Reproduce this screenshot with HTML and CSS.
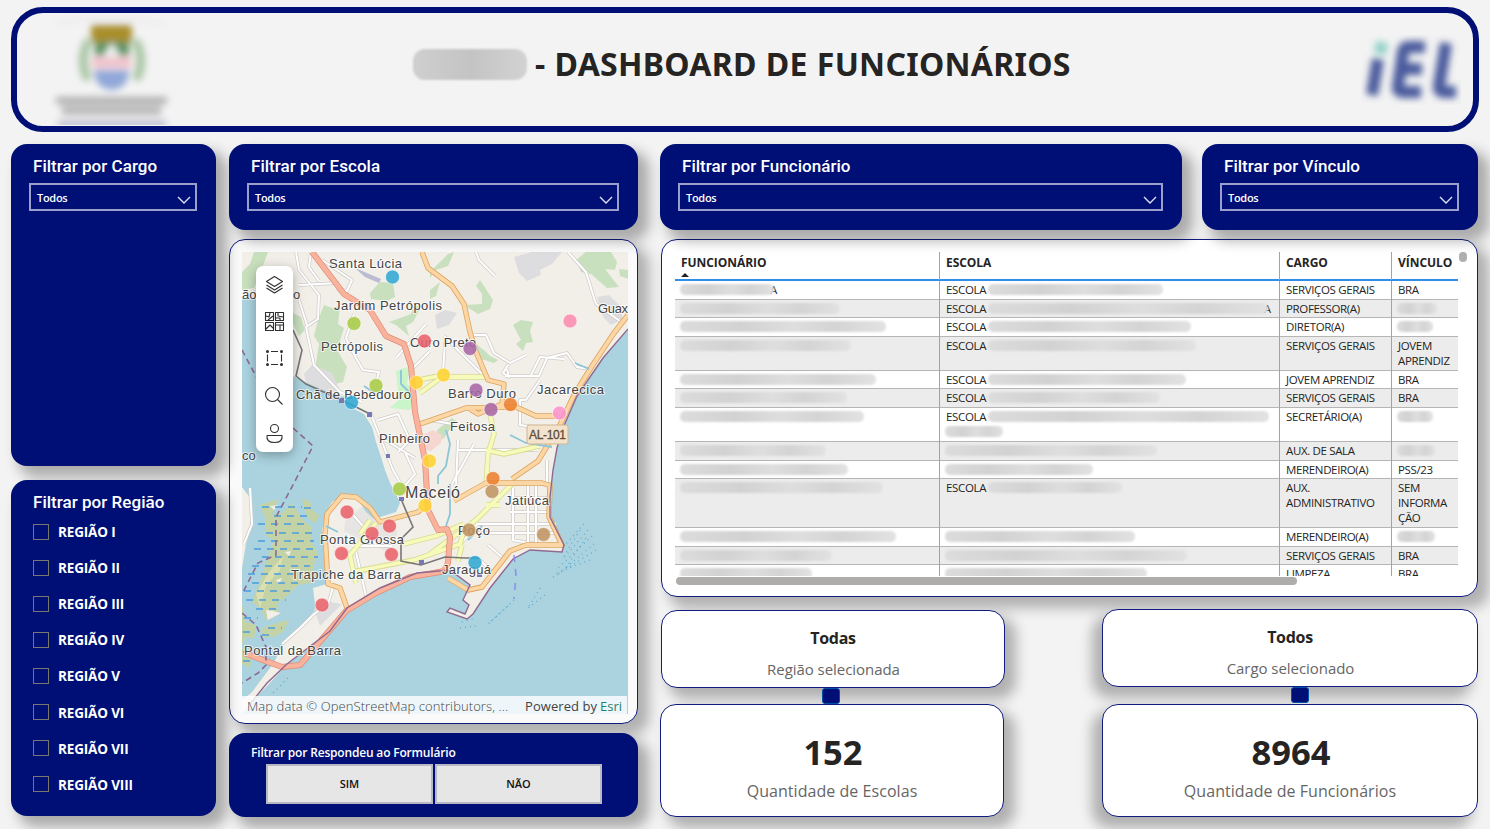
FILE: index.html
```
<!DOCTYPE html>
<html lang="pt-BR">
<head>
<meta charset="utf-8">
<title>Dashboard de Funcionários</title>
<link rel="stylesheet" href="styles.css">
</head>
<body>
<header class="banner">
  <svg class="crest" width="124" height="110" viewBox="50 15 124 110">
    <defs><filter id="soft" x="-20%" y="-20%" width="140%" height="140%"><feGaussianBlur stdDeviation="3.6"/></filter></defs>
    <g filter="url(#soft)">
      <path d="M56 24Q112 12 165 24" fill="none" stroke="#e2e2e2" stroke-width="2"/>
      <path d="M89 40Q78 60 88 80M135 40Q146 60 136 80" fill="none" stroke="#a9c6a4" stroke-width="9"/>
      <rect x="91" y="25" width="41" height="17" rx="2" fill="#a98e2c"/>
      <path d="M95 42h34v14H95z" fill="#5d9463"/>
      <path d="M103 56l9-14 8 14z" fill="#eef3ee"/>
      <path d="M92 57h39v11H92z" fill="#f0c3ca"/>
      <path d="M94 70h35q0 18-17 20-18-2-18-20z" fill="#91a7d8"/>
      <rect x="56" y="97" width="111" height="7" fill="#adadad"/>
      <rect x="62" y="106" width="99" height="9" fill="#b8b8b8"/>
      <rect x="58" y="121" width="108" height="6" fill="#b4b5cc"/>
    </g>
  </svg>
  <h1 class="title"><span class="smudge name"></span><span class="title-text">- DASHBOARD DE FUNCIONÁRIOS</span></h1>
  <svg class="brand" width="100" height="70" viewBox="1361 35 100 70">
    <g filter="url(#soft)" fill="none" stroke="#4a5a9c" stroke-width="12" stroke-linejoin="round">
      <path d="M1378 59l-6 36"/>
      <path d="M1425 47h-17q-4 0-5 5l-5 34q-1 6 5 6h18M1402 69h20"/>
      <path d="M1446 43l-7 43q-1 6 5 6h12"/>
      <path d="M1382 42l-2 12" stroke="#8fd0c6"/>
    </g>
  </svg>
</header>

<main class="board">
  <div class="col-left">
    <section class="panel cargo">
      <h2>Filtrar por Cargo</h2>
      <div class="select"><span>Todos</span><svg width="14" height="8" viewBox="0 0 14 8"><path d="M1 1l6 6 6-6"/></svg></div>
    </section>
    <section class="panel regiao">
      <h2>Filtrar por Região</h2>
      <ul>
        <li><i></i>REGIÃO I</li><li><i></i>REGIÃO II</li><li><i></i>REGIÃO III</li><li><i></i>REGIÃO IV</li>
        <li><i></i>REGIÃO V</li><li><i></i>REGIÃO VI</li><li><i></i>REGIÃO VII</li><li><i></i>REGIÃO VIII</li>
      </ul>
    </section>
  </div>

  <div class="col-mid">
    <section class="panel slim">
      <h2>Filtrar por Escola</h2>
      <div class="select"><span>Todos</span><svg width="14" height="8" viewBox="0 0 14 8"><path d="M1 1l6 6 6-6"/></svg></div>
    </section>
    <section class="card mapcard">
      <svg class="map" width="386" height="462" viewBox="242 252 386 462">
        <defs>
          <path id="minor" d="M296 252l3 18 20 25 -1 24-12 8 8 38 26 27 22 10M299 285l40-2M319 281l-10-14 2-15M299 300l8 25M322 260l30 20-5 11-10-2M354 314l-8 24 10 20 7 12 16 2-4 14M476 252l3 8 16 16M568 252l18 20 10 32 24 17M426 324l-30 34M444 336l40 40M445 342l-2 30M430 351l-20 20M474 335l12 0 8 18 16 10 16-8M508 365l-5 8 6 4-2-8M505 376h34l8-18 20-5 10 14 12 2M530 377l10-20 24 2M540 380l-14 20h-6v25l14 2M378 420l20-6 12 26-12 12M371 414l22 56 8 14M385 440l30 18M405 452l10 22-12 14M430 420l22 4M458 440l-2 44M458 450h80M452 484l22-40M547 460v22M513 488v52M528 485v60M536 485v60M514 498h34M510 512h40M476 524h80M476 533h82M512 540l36 6M460 545l18-22M346 507l16 18 14 20M352 546h40M356 552l10 44M334 584l-6 20-14 10-14 14-18 16M250 488l2 36-8 20M480 560l12 12M488 545l14 12"/>
          <path id="avenue" d="M420 393l22-16h46M418 380l26-5M488 404l6 30-6 20-2 32M486 450l18 4 36-8M512 484l-36 36-46 34M376 523l-26 32 6 28M352 572l62-12 46-16 6-20M370 520l-10 14M404 544l32-8 28-12M462 545l-4 16M500 505l-14 0"/>
          <path id="primary" d="M422 252l6 16 24 18 12 18 6 28 6 20 12 28 16 4-2 20-24 10-8-5M420 424l46-16 50-1 20 9h22M628 315l-14 18-20 30-20 32-14 30-22 36-26 18M552 486l-10-3h-56l-18 10-14 8M550 485l-1 32 13 28-36 0-16 6-28 36-14 3-20-12M422 508l-4 4-38 10-10-14-14-11-14-1-15 18-2 20 3 50 12 4 7 20"/>
          <path id="trunk" d="M312 252l32 42 26 16 16 26 18 8 7 22 4 46 10 48 3 50 10 20 9-1 3 8-2 26-4 8-10 2-24 4-34 16-30 18-46 54-18 2-38-14"/>
        </defs>
        <rect x="242" y="252" width="386" height="462" fill="#f2efe9"/>
        <!-- parks and built areas -->
        <g fill="#c8e0be">
          <path d="M242 272l8-8 4-12h14l-8 22-6 14-12 2z"/>
          <path d="M370 293l10-11 13 1 2 14-8 4-16-2z"/>
          <path d="M318 320l6-15 8 3 8-2-2 18 6 4-7 22 10 17-4 15-12 3-4-12-12-3 4-26-5-8z"/>
          <path d="M293 313l8 4 4 13-6 6-6-12z"/>
          <path d="M389 322l22-8 4-10 5 5-7 13-7 4 3 10-13-11z"/>
          <path d="M430 272l8-8 10-10 6-2-6 14-12 4-6 8z"/>
          <path d="M464 305l18-1 0-10-6-8 4-6 13 20-3 9-12 5z"/>
          <path d="M513 325l8-5 12 2-3 9 3 11-7 1-3 8-7-7 5-4z"/>
          <path d="M475 343l10 8 5 5 8 4-4 3-13-4z"/>
          <path d="M576 260l10-8h25l6 10-2 8-10-1 14 18-12 1-16-14-10-2z"/>
          <path d="M619 269l9 1v9l-8-3zM437 430l15-12 4 3-12 17-6 3z"/>
          <path d="M430 290l10-8-4 14-6 3z"/>
        </g>
        <path d="M396 371l14-5-3 18 9 10-6 16-20-2 9-8z" fill="#c9f5c9"/>
        <g fill="#dddddf">
          <path d="M514 257l18-5h30l-10 12-12 6 1 5-14 6-8-8z"/><path d="M304 374l8-9 20 8 8 18-12 4-22-12z"/>
          <path d="M435 315l10-5 12 3-8 12-12 4zM597 297l12-2 10 10 4 14-12 6-8-8z"/>
          <path d="M366 505l12 8-2 10 22 8-8 22-22-10-24-12 2-14z" opacity=".55"/>
        </g>
        <path d="M421 436l12-6 9 5-1 8-10 8-9-2z" fill="#f6d6d0"/>
        <!-- water -->
        <g fill="#aad3df">
          <path d="M242 298L274 300 293 330V376L309 384 326 391 345 397 352 408 364 414 372 427 376 442 381 457 385 470 390 483 396 494 400 503 396 512 374 519 366 512 358 499 345 495 332 502 326 513 322 530 324 556 327 584 313 588 316 612 303 627 283 645 273 664 255 688 242 706Z"/>
          <path d="M628 330L603 358 577 396 563 428 557 448 553 470 550 497 550 517 564 545 562 552 530 550 513 559 490 588 473 614 467 619 447 612 450 608 465 614 469 605 463 600 470 585 450 570 417 573 380 588 347 608 330 631 287 664 267 683 242 714H628Z"/>
        </g>
        <path d="M242 487l9 12-1 28-4 17-4 24z" fill="#f2efe9"/>
        <path d="M303 626l12-14 2-22 12-4 8 16-6 28-44 34-20 22-25 26V700l26-20 10-20 10-12z" fill="#f2efe9"/>
        <path d="M314 609l16-7 12 2-22 22z" fill="#dddddf"/>
        <!-- marsh -->
        <g fill="#c4d3a6">
          <path d="M260 505l18-6-6 16 10-2 10-10 12 18 8 6-1 14 7 12-5 14-2 16-13 2-10 10-10 8-1 12-10 6-6-12-9-7 8-20 6-20 8-22-8-4-1-18z"/>
          <path d="M302 499l8 2 3 10 6 4-4 9-9-8z"/><path d="M242 604l4 18 10 3-2 14-8-2-4 8z"/>
          <path d="M262 628l18-6 9-2-6 12-10 5-12 0z"/><path d="M242 648l10 2-2 18-8-4z"/>
        </g>
        <path d="M283 556l-14 16-13 22 4 14 6-22 14-16zM266 619l14-6-9-4z" fill="#dce0b0"/>
        <g fill="#f2efe9"><path d="M266 610l15 3-13 7zM276 580l6-2-3 6zM285 552l6-1-2 5zM270 506l8-1-4 5z"/></g>
        <g stroke="#4a9de0" stroke-width="1.3" stroke-dasharray="7 6">
          <path d="M262 507h40M274 516h36M258 524h50M266 533h50M258 541h56M254 549h60M262 557h56M252 566h58M248 574h54M252 583h48M244 591h48M246 600h40M256 609h20M244 618h14M268 628h14M262 635h10M243 632h12M243 652h10M243 661h8M304 508h12"/>
        </g>
        <!-- roads: casing below, fill above -->
        <g fill="none" stroke-linejoin="round">
          <use href="#minor" stroke="#cfccc8" stroke-width="3.400"/><use href="#minor" stroke="#fff" stroke-width="2"/>
          <use href="#avenue" stroke="#d9db91" stroke-width="5.400"/><use href="#avenue" stroke="#f6fabb" stroke-width="3.800"/>
          <use href="#primary" stroke="#dda45f" stroke-width="5.400"/><use href="#primary" stroke="#fcd6a4" stroke-width="3.800"/>
          <use href="#trunk" stroke="#e08a74" stroke-width="6"/><use href="#trunk" stroke="#f9b29c" stroke-width="4.600"/>
        </g>
        <!-- railway, streams and boundaries -->
        <path d="M293 330l9 20-6 26 10 8 20 9 22 10 22 11M401 499l12 28-12 12v22l20 4 24-8 20 1h14" fill="none" stroke="#777" stroke-width="1.6"/>
        <g fill="none" stroke="#8cc5d8" stroke-width="1.8"><path d="M446 430l4 14-4 22-8 10v8M401 370v14l8 8M510 435l16 8 26 4M450 484v30l-4 12M468 540l14-14M326 526l12 6M575 363l14 6M364 386l12 8"/></g>
        <g fill="none" stroke="#8c6a96" stroke-width="1.6" stroke-dasharray="6 4"><path d="M242 350l16 30M293 428l20 18-19 37-18 34v38l-18 8-16 31M242 613l14 12 10 22v18l-8 8-16 10"/></g>
        <path d="M628 329L603 358 577 396 563 428 557 448 553 470 550 497 550 517 564 545 562 552 530 550 513 559 490 588 473 614 467 619 447 612 450 608 465 614 469 605 463 600 470 585 450 570 417 573 380 588 347 608 330 631 287 664 267 683 250 704" fill="none" stroke="#91688f" stroke-width="1.4"/>
        <path d="M514 555l2 20-2 24" fill="none" stroke="#8c8cf0" stroke-width="1.5" stroke-dasharray="7 7"/>
        <g fill="none" stroke="#5aa9cf" stroke-width="1.2" stroke-dasharray="1 4">
          <path d="M584 524l-20 22M588 530l-26 30M592 536l-36 34M594 544l-38 32M596 550l-44 28M590 560l-36 14M580 530l-16 26M586 538l-22 32M540 588l-12 20M545 595l-18 14M514 600l-26 24M508 606l-20 18M462 622l14-4M460 628l16-2M288 678l-16 16"/>
        </g>
        <g fill="#7779b5"><path d="M339 398h5v5h-5zM367 412h5v5h-5zM386 454h4v4h-4zM399 497h5v4h-5zM419 560h5v4h-5zM477 573h5v4h-5z"/></g>
        <path d="M355 268l26 11-2 4-14-6z" fill="#bbbbd4"/>
        <!-- place names -->
        <g class="place">
          <text x="329" y="268" textLength="73">Santa Lúcia</text>
          <text x="334" y="310" textLength="108">Jardim Petrópolis</text>
          <text x="321" y="351" textLength="62">Petrópolis</text>
          <text x="410" y="347" textLength="66">Ouro Preto</text>
          <text x="296" y="399" textLength="115">Chã de Bebedouro</text>
          <text x="379" y="443" textLength="51">Pinheiro</text>
          <text x="448" y="398" textLength="68">Barro Duro</text>
          <text x="450" y="431" textLength="45">Feitosa</text>
          <text x="537" y="394" textLength="67">Jacarecica</text>
          <text x="598" y="313" textLength="30">Guax</text>
          <text x="242" y="299">ão</text><text x="293" y="299">o</text><text x="242" y="460">co</text>
          <text x="505" y="505" textLength="44">Jatiúca</text>
          <text x="458" y="535" textLength="32">Poço</text>
          <text x="442" y="574" textLength="49">Jaraguá</text>
          <text x="320" y="544" textLength="84">Ponta Grossa</text>
          <text x="291" y="579" textLength="110">Trapiche da Barra</text>
          <text x="244" y="655" textLength="97">Pontal da Barra</text>
          <text class="city" x="405" y="498" textLength="55">Maceió</text>
        </g>
        <rect x="527" y="425" width="41" height="19" rx="2" fill="#f3e3cc" stroke="#d3b58e"/>
        <text class="shield" x="529" y="439" textLength="37">AL-101</text>
        <!-- schools -->
        <g class="pins">
          <g fill="#2fa8d3"><circle cx="392.500" cy="277" r="7"/><circle cx="351.500" cy="402.500" r="7"/><circle cx="475" cy="562.500" r="7"/></g>
          <g fill="#a6cb44"><circle cx="354" cy="323.500" r="7"/><circle cx="376" cy="385.500" r="7"/><circle cx="399.500" cy="489" r="7"/></g>
          <g fill="#fed230"><circle cx="416.500" cy="382.500" r="7"/><circle cx="443.500" cy="375" r="7"/><circle cx="429.500" cy="461" r="7"/><circle cx="425" cy="505.500" r="7"/></g>
          <g fill="#e9616a"><circle cx="424.500" cy="341" r="7"/><circle cx="347" cy="512" r="7"/><circle cx="389.500" cy="526" r="7"/><circle cx="372" cy="533.500" r="7"/><circle cx="341.500" cy="553.500" r="7"/><circle cx="391.500" cy="554.500" r="7"/><circle cx="322" cy="605" r="7"/></g>
          <g fill="#a666a6"><circle cx="470" cy="348.500" r="7"/><circle cx="476" cy="390" r="7"/><circle cx="491" cy="409.500" r="7"/></g>
          <g fill="#ec7f2e"><circle cx="510.500" cy="404.500" r="7"/><circle cx="493" cy="478.500" r="7"/></g>
          <g fill="#bf9360"><circle cx="492" cy="491.500" r="7"/><circle cx="469" cy="530" r="7"/><circle cx="543.500" cy="534.500" r="7"/></g>
          <circle cx="570" cy="321" r="7" fill="#fb8bb0"/><circle cx="559.500" cy="413" r="7" fill="#fb92cc"/>
        </g>
        <rect x="242" y="696" width="385" height="18" fill="#fff" opacity=".8"/>
        <rect class="tools" x="256" y="266" width="37" height="186" rx="7"/>
        <g fill="none" stroke="#2f2f2f" stroke-width="1.1" stroke-linejoin="round">
          <path d="M266.500 281.500l8-5 8 5-8 5zM266.500 285l8 5 8-5M266.500 288l8 5 8-5"/>
          <path d="M265.500 312.500h8v8h-8zM275.500 312.500h8v8h-8zM265.500 322.500h8v8h-8zM275.500 322.500h8v8h-8zM266 316l3 1 1-4M268 320l5-4M278 313v3l5 1M276 318h4v2M266 329l4-4 3 3M276 325h7M280 325v5"/>
          <path d="M271 351.500h7M271 364.500h7M267.500 354.500v7M281.500 354.500v7"/>
          <circle cx="272.500" cy="394.500" r="7"/><path d="M277.500 399.500l5 5"/>
          <circle cx="274.500" cy="428.500" r="4"/><path d="M267 435.500h15q1 7-7.500 7t-7.500-7z"/>
        </g>
        <g fill="#2f2f2f"><circle cx="267.500" cy="351.500" r="1.500"/><circle cx="281.500" cy="351.500" r="1.500"/><circle cx="267.500" cy="364.500" r="1.500"/><circle cx="281.500" cy="364.500" r="1.500"/></g>
        <g class="credit"><text x="247" y="711" textLength="261">Map data © OpenStreetMap contributors, ...</text><text class="dark" x="525" y="711" textLength="72">Powered by</text><text class="esri" x="600" y="711" textLength="22">Esri</text></g>
      </svg>
    </section>
    <section class="panel form">
      <h3>Filtrar por Respondeu ao Formulário</h3>
      <div class="buttons"><button>SIM</button><button>NÃO</button></div>
    </section>
  </div>

  <div class="col-right">
    <div class="filters">
      <section class="panel slim">
        <h2>Filtrar por Funcionário</h2>
        <div class="select"><span>Todos</span><svg width="14" height="8" viewBox="0 0 14 8"><path d="M1 1l6 6 6-6"/></svg></div>
      </section>
      <section class="panel slim">
        <h2>Filtrar por Vínculo</h2>
        <div class="select"><span>Todos</span><svg width="14" height="8" viewBox="0 0 14 8"><path d="M1 1l6 6 6-6"/></svg></div>
      </section>
    </div>
    <section class="card tablecard">
      <div class="table">
        <div class="tr head"><div>FUNCIONÁRIO<b class="sort"></b></div><div>ESCOLA</div><div>CARGO</div><div>VÍNCULO</div></div>
        <div class="tr"><div><span class="smudge" style="width:94px"></span><em>A</em></div><div>ESCOLA <span class="smudge" style="width:175px"></span></div><div>SERVIÇOS GERAIS</div><div>BRA</div></div>
        <div class="tr"><div><span class="smudge" style="width:160px"></span></div><div>ESCOLA <span class="smudge" style="width:280px"></span><em>A</em></div><div>PROFESSOR(A)</div><div><span class="smudge" style="width:40px"></span></div></div>
        <div class="tr"><div><span class="smudge" style="width:206px"></span></div><div>ESCOLA <span class="smudge" style="width:203px"></span></div><div>DIRETOR(A)</div><div><span class="smudge" style="width:36px"></span></div></div>
        <div class="tr h34"><div><span class="smudge" style="width:171px"></span></div><div>ESCOLA <span class="smudge" style="width:208px"></span></div><div>SERVIÇOS GERAIS</div><div>JOVEM<br>APRENDIZ</div></div>
        <div class="tr"><div><span class="smudge" style="width:196px"></span></div><div>ESCOLA <span class="smudge" style="width:198px"></span></div><div>JOVEM APRENDIZ</div><div>BRA</div></div>
        <div class="tr"><div><span class="smudge" style="width:167px"></span></div><div>ESCOLA <span class="smudge" style="width:172px"></span></div><div>SERVIÇOS GERAIS</div><div>BRA</div></div>
        <div class="tr h34"><div><span class="smudge" style="width:184px"></span></div><div>ESCOLA <span class="smudge" style="width:281px"></span><br><span class="smudge" style="width:58px"></span></div><div>SECRETÁRIO(A)</div><div><span class="smudge" style="width:36px"></span></div></div>
        <div class="tr"><div><span class="smudge" style="width:146px"></span></div><div><span class="smudge" style="width:212px"></span></div><div>AUX. DE SALA</div><div><span class="smudge" style="width:38px"></span></div></div>
        <div class="tr"><div><span class="smudge" style="width:168px"></span></div><div><span class="smudge" style="width:148px"></span></div><div>MERENDEIRO(A)</div><div>PSS/23</div></div>
        <div class="tr h49"><div><span class="smudge" style="width:203px"></span></div><div>ESCOLA <span class="smudge" style="width:134px"></span></div><div>AUX.<br>ADMINISTRATIVO</div><div>SEM<br>INFORMA<br>ÇÃO</div></div>
        <div class="tr"><div><span class="smudge" style="width:216px"></span></div><div><span class="smudge" style="width:190px"></span></div><div>MERENDEIRO(A)</div><div><span class="smudge" style="width:38px"></span></div></div>
        <div class="tr"><div><span class="smudge" style="width:152px"></span></div><div><span class="smudge" style="width:242px"></span></div><div>SERVIÇOS GERAIS</div><div>BRA</div></div>
        <div class="tr"><div><span class="smudge" style="width:132px"></span></div><div><span class="smudge" style="width:202px"></span></div><div>LIMPEZA</div><div>BRA</div></div>
      </div>
      <div class="vthumb"></div>
      <div class="hthumb"></div>
    </section>
    <div class="stats">
      <div class="stat left">
        <section class="card picked"><strong>Todas</strong><span>Região selecionada</span></section>
        <i class="link"></i>
        <section class="card total"><strong>152</strong><span>Quantidade de Escolas</span></section>
      </div>
      <div class="stat right">
        <section class="card picked"><strong>Todos</strong><span>Cargo selecionado</span></section>
        <i class="link"></i>
        <section class="card total"><strong>8964</strong><span>Quantidade de Funcionários</span></section>
      </div>
    </div>
  </div>
</main>
</body>
</html>
```
FILE: styles.css
```
* { box-sizing: border-box; }
body {
  margin: 0;
  width: 1490px;
  height: 829px;
  overflow: hidden;
  padding: 7px 11px 0;
  background: #f3f3f3;
  color: #252423;
  font-family: "Open Sans", "Noto Sans", sans-serif;
}
h1, h2, h3, ul { margin: 0; padding: 0; }

.banner {
  display: flex;
  width: 1468px;
  height: 125px;
  padding: 2px 12px 0 33px;
  border: 6px solid #000f76;
  border-radius: 32px;
}
.title { display: flex; align-items: center; gap: 8px; height: 98px; margin-left: 240px; }
.title-text {
  width: 538px;
  font: 700 32px/44px "Noto Sans", sans-serif;
  letter-spacing: .28px;
  word-spacing: .5px;
  white-space: nowrap;
}
.brand { margin: 20px 0 0 auto; }

.smudge {
  display: inline-block;
  height: 11px;
  margin-left: -1px;
  border-radius: 5px;
  background: linear-gradient(90deg, #dcdcdc, #d2d2d2 30%, #dedede 55%, #d4d4d4 75%, #e2e2e2);
  filter: blur(1px);
  vertical-align: -1px;
}
.smudge.name { width: 114px; height: 31px; border-radius: 12px; background: linear-gradient(90deg, #cfcfcf, #c4c4c4 50%, #d2d2d2); }

.board { display: flex; margin-top: 12px; }
.col-left { display: flex; flex-direction: column; gap: 14px; width: 205px; margin-right: 13px; }
.col-mid { display: flex; flex-direction: column; gap: 9px; width: 409px; margin-right: 22px; }
.col-right { display: flex; flex-direction: column; width: 818px; }

.panel {
  z-index: 1;
  padding: 12px 19px 0 18px;
  border-radius: 16px;
  background: #000f76;
  color: #fff;
  box-shadow: 9px 9px 13px 2px rgba(0, 0, 0, .3);
}
.panel h2 {
  margin-left: 4px;
  font: 500 17px/20px Roboto, sans-serif;
  letter-spacing: .03px;
}
.cargo { height: 322px; }
.regiao { height: 336px; }
.slim { height: 86px; }
.select {
  display: flex;
  align-items: center;
  justify-content: space-between;
  height: 28px;
  margin-top: 7px;
  padding: 0 4px 0 6px;
  border: 2px solid #9a9fcb;
  font-size: 11px;
  font-weight: 600;
  letter-spacing: -.3px;
}
.select svg { margin-top: 5px; fill: none; stroke: #dfe1f2; stroke-width: 1.4; }

.regiao ul { list-style: none; margin: 2px 0 0 4px; }
.regiao li { display: flex; align-items: center; height: 36.1px; font-size: 13.5px; font-weight: 700; letter-spacing: -.15px; }
.regiao i { width: 16px; height: 16px; margin: -1px 9px 0 0; border: 1px solid #77776f; }

.form { height: 84px; padding-top: 11px; }
.form h3 { margin-left: 4px; font: 600 12px/17px "Open Sans", sans-serif; letter-spacing: -.18px; }
.buttons { display: flex; gap: 2px; margin: 3px 0 0 19px; }
.buttons button {
  width: 167px;
  height: 40px;
  border: 2px solid #b9b9c6;
  background: #e6e6e6;
  color: #111;
  font: 600 11px "Open Sans", sans-serif;
  padding-bottom: 3px;
}

.card {
  border: 1px solid #101c80;
  border-radius: 16px;
  background: #fff;
  box-shadow: 9px 9px 13px 2px rgba(0, 0, 0, .28);
}
.mapcard { height: 485px; padding: 12px; background: #fafafa; }
.map { display: block; }
.place text { font: 13px "Liberation Sans", sans-serif; fill: #444; stroke: #fff; stroke-opacity: .7; stroke-width: 2px; paint-order: stroke; }
.place .city { font-size: 16px; }
.shield { font: 12px "Liberation Sans", sans-serif; fill: #5d4b38; stroke: #5d4b38; stroke-width: .3px; }
.pins circle { stroke: #fff; stroke-width: .8px; stroke-opacity: .7; fill-opacity: .87; }
.tools { fill: #fff; filter: drop-shadow(0 3px 6px rgba(0, 0, 0, .3)); }
.credit text { font: 300 13px "Open Sans", sans-serif; fill: #444; }
.credit .dark { font-weight: 400; }
.credit .esri { font-weight: 400; fill: #23806f; }

.filters { display: grid; grid-template-columns: 522px 276px; gap: 20px; z-index: 1; }
.filters .panel { z-index: 1; }

.tablecard {
  display: grid;
  grid-template-columns: 783px 1fr;
  grid-template-rows: 324px 8px;
  height: 358px;
  margin: 9px 0 0 1px;
  padding: 12px 11px 0 13px;
}
.table { height: 324px; overflow: hidden; font-size: 11.5px; line-height: 15px; letter-spacing: -.35px; }
.tr { display: grid; grid-template-columns: 265px 340px 112px 66px; height: 18.6px; border-bottom: 1px solid #b5b5b5; }
.tr > div { padding: 1px 0 0 6px; border-right: 1px solid #69b1f2; margin-bottom: -1px; white-space: nowrap; }
.tr > div:last-child { border-right: 0; }
.tr em { font-style: normal; margin-left: -4px; }
.tr.head { height: 29px; border-color: #2f8fe8; border-bottom-width: 2px; font-size: 12px; font-weight: 700; letter-spacing: -.05px; }
.tr.head > div { padding-top: 3px; }
.sort { display: block; width: 0; margin-top: 3px; border: 4px solid transparent; border-top: 0; border-bottom: 4px solid #222; }
.tr.h34 { height: 34px; }
.tr.h49 { height: 49px; }
.tr:nth-child(odd):not(.head) { background: #ececec; }
.vthumb { width: 8px; height: 10px; margin: 0 0 0 1px; border-radius: 4px; background: #b0afad; }
.hthumb { width: 621px; height: 8px; margin: 1px 0 0 1px; border-radius: 4px; background: #aeadab; }

.stats { display: flex; justify-content: space-between; margin-top: 12px; }
.stat { display: flex; flex-direction: column; width: 344px; }
.stat .card { display: flex; flex-direction: column; align-items: center; }
.stat.right { width: 376px; }
.stat.right .card { box-shadow: -8px 9px 13px 2px rgba(0, 0, 0, .28); }
.picked { height: 78px; padding-top: 16px; }
.picked strong { font-size: 16px; line-height: 22px; letter-spacing: -.3px; }
.picked span { margin: 10px 0 0 1px; font-size: 15px; line-height: 20px; letter-spacing: -.05px; color: #666; }
.link { z-index: 1; width: 18px; height: 16px; margin-left: 162px; border: 1px solid #0050a8; border-radius: 3px; background: #000f76; }
.stat.right .link { margin: 0 0 1px 189px; }
.stat.left { margin-top: 1px; }
.stat.left .picked { margin: 0 -1px 0 1px; }
.total { height: 113px; padding-top: 26px; }
.total strong { font: 700 34.5px/42px "Noto Sans", sans-serif; margin-left: 2px; }
.total span { margin-top: 7px; font-size: 16px; line-height: 22px; letter-spacing: .05px; color: #666; }
```
